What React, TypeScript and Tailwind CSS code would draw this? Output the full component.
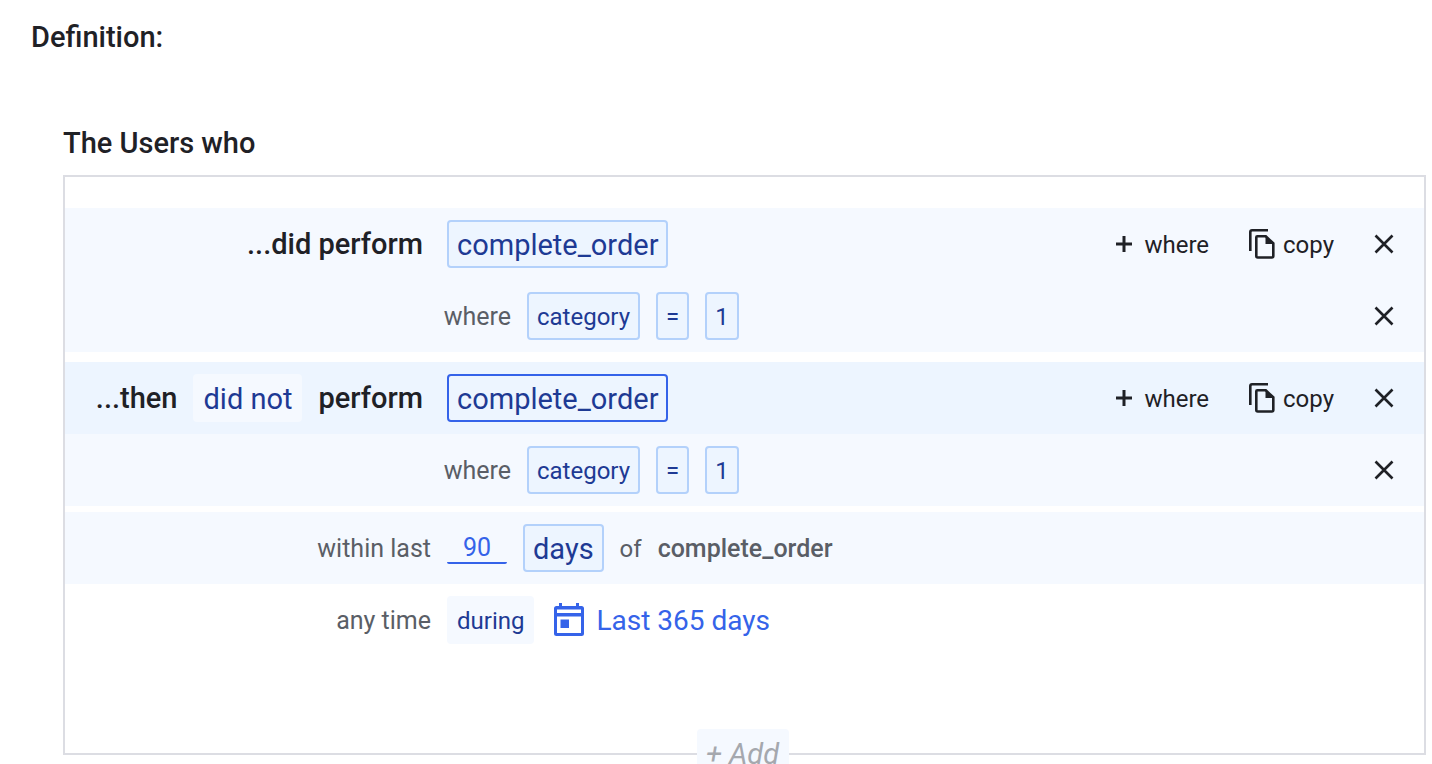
import { useState } from 'react'
import type { ReactNode } from 'react'
import clsx from 'clsx'

const PlusIcon = () => (
  <svg viewBox="0 0 16 16" className="size-4" fill="none" stroke="currentColor" strokeWidth="3" aria-hidden="true">
    <path d="M8 0v16M0 8h16" />
  </svg>
)

const CopyIcon = () => (
  <svg viewBox="0 0 26 30" className="h-[30px] w-[26px]" fill="none" stroke="currentColor" strokeWidth="2.6" aria-hidden="true">
    <path d="M1.3 22V3Q1.3 1.3 3 1.3H19" />
    <path d="M8.3 7.3H16.8L24.3 14.4V27Q24.3 28.5 22.8 28.5H8.8Q7.3 28.5 7.3 27V8.3Q7.3 7.3 8.3 7.3Z" />
    <path d="M16.5 6.5V15H25.2Z" fill="currentColor" stroke="none" />
  </svg>
)

const CloseIcon = () => (
  <svg viewBox="0 0 20 20" className="size-5" fill="none" stroke="currentColor" strokeWidth="2.6" aria-hidden="true">
    <path d="M1.5 1.5l17 17M18.5 1.5l-17 17" />
  </svg>
)

const CalendarIcon = () => (
  <svg viewBox="0 0 30 34" className="h-[34px] w-[30px]" fill="currentColor" aria-hidden="true">
    <path
      fillRule="evenodd"
      d="M5 0h3v3h14V0h3v3h2.500q2.500 0 2.500 2.500V30.500q0 2.500-2.500 2.500h-25Q0 33 0 30.500V5.500q0-2.500 2.500-2.500H5ZM3 6.500v3.500h24V6.500ZM3 13.500V30h24V13.500Z"
    />
    <path d="M6.500 16.500h8.500v8.500H6.500Z" />
  </svg>
)

type ChipProps = {
  children: ReactNode
  variant?: 'outlined' | 'active' | 'plain'
  small?: boolean
}

const Chip = ({ children, variant = 'outlined', small }: ChipProps) => (
  <button
    type="button"
    className={clsx(
      'h-12 shrink-0 rounded border-2 px-2 pt-0.5 font-normal text-[#1e3a94] cursor-pointer',
      small ? 'text-[24px]' : 'text-[29px]',
      variant === 'outlined' && 'border-[#b3d1fb] bg-[#edf5ff]',
      variant === 'active' && 'border-[#3563e9] bg-[#edf5ff]',
      variant === 'plain' && 'border-[#f5f9ff] bg-[#f5f9ff]',
    )}
  >
    {children}
  </button>
)

const RemoveButton = ({ label }: { label: string }) => (
  <button type="button" aria-label={label} className="flex size-9 items-center justify-center cursor-pointer">
    <CloseIcon />
  </button>
)

const EventActions = () => (
  <div className="ml-auto flex items-center pr-[22px] text-[24px]">
    <button type="button" className="mr-10 flex items-center gap-3 cursor-pointer">
      <PlusIcon />
      <span className="pt-0.5">where</span>
    </button>
    <button type="button" className="mr-8 flex items-center gap-2 cursor-pointer">
      <CopyIcon />
      <span className="pt-0.5">copy</span>
    </button>
    <RemoveButton label="Remove event" />
  </div>
)

const WhereRow = () => (
  <div className="flex h-[72px] items-center bg-[#f5f9ff]">
    <div className="w-[462px] shrink-0 pt-0.5 pr-4 text-right text-[#5a5e66]">where</div>
    <div className="flex gap-4">
      <Chip small>category</Chip>
      <Chip small>=</Chip>
      <Chip small>1</Chip>
    </div>
    <div className="ml-auto pr-[22px]">
      <RemoveButton label="Remove filter" />
    </div>
  </div>
)

const App = () => {
  const [days, setDays] = useState('90')

  return (
    <main className="h-screen overflow-hidden bg-white pt-4 pr-[6px] font-[Roboto,sans-serif] text-[25px] text-[#1f2126]">
      <h1 className="pl-[31px] text-[29px] leading-[42px] font-medium">Definition:</h1>

      <section className="mt-16 pl-[63px]">
        <h2 className="text-[29px] leading-[42px] font-medium">The Users who</h2>

        <div className="relative mt-[11px] border-2 border-[#dcdde3] pt-[31px] pb-[97px]">
          {/* First event */}
          <div className="flex h-[72px] items-center bg-[#f5f9ff]">
            <div className="w-[382px] shrink-0 pt-0.5 pr-6 text-right text-[29px] font-medium">...did perform</div>
            <Chip>complete_order</Chip>
            <EventActions />
          </div>
          <WhereRow />

          {/* Second event */}
          <div className="mt-[10px] flex h-[72px] items-center bg-[#edf5ff]">
            <div className="flex w-[382px] shrink-0 items-center justify-end gap-4 pr-6 text-[29px] font-medium">
              <span className="pt-0.5">...then</span>
              <Chip variant="plain">did not</Chip>
              <span className="pt-0.5">perform</span>
            </div>
            <Chip variant="active">complete_order</Chip>
            <EventActions />
          </div>
          <WhereRow />

          {/* Time window */}
          <div className="mt-[6px] flex h-[72px] items-center bg-[#f5f9ff] text-[#5a5e66]">
            <label htmlFor="days" className="w-[382px] shrink-0 pt-0.5 pr-4 text-right">within last</label>
            <input
              id="days"
              type="text"
              value={days}
              onChange={e => setDays(e.target.value)}
              className="mr-4 h-8 w-[60px] rounded-xs border-b-2 border-[#3563e9] bg-transparent pt-0.5 text-center text-[#3563e9] focus:outline-none"
            />
            <Chip>days</Chip>
            <span className="ml-4 pt-0.5 text-[24px]">of</span>
            <span className="ml-4 pt-0.5 font-medium">complete_order</span>
          </div>

          <div className="flex h-[72px] items-center">
            <div className="w-[382px] shrink-0 pt-0.5 pr-4 text-right text-[#5a5e66]">any time</div>
            <Chip variant="plain" small>during</Chip>
            <button type="button" className="ml-5 flex items-center gap-3 text-[28px] text-[#3563e9] cursor-pointer">
              <CalendarIcon />
              <span className="pt-0.5">Last 365 days</span>
            </button>
          </div>

          {/* Sits over the bottom border */}
          <div className="absolute inset-x-0 top-full flex -translate-y-1/2 justify-center pr-1">
            <button
              type="button"
              className="h-12 w-[92px] rounded bg-[#f5f9ff] pt-1 text-[29px] text-[#a5a8ae] italic cursor-pointer"
            >
              + Add
            </button>
          </div>
        </div>
      </section>
    </main>
  )
}

export default App
